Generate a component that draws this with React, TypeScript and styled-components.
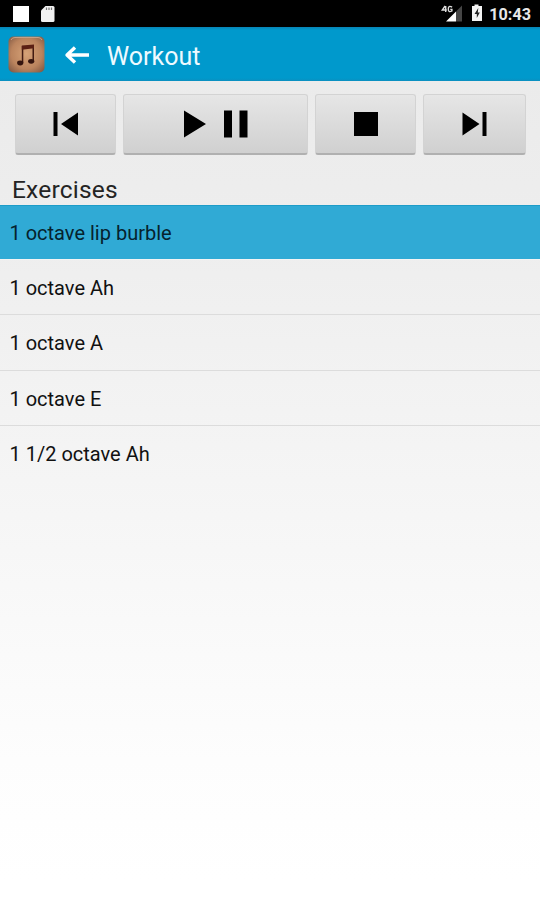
import React from 'react';
import styled, { createGlobalStyle } from 'styled-components';

const GlobalStyle = createGlobalStyle`
  * { box-sizing: border-box; }
  body { margin: 0; font-family: Roboto, "Liberation Sans", sans-serif; color: #161616; }
`;

const Screen = styled.div`
  height: 900px;
  display: flex;
  flex-direction: column;
  overflow: hidden;
  background: linear-gradient(#ebebeb 81px, #eeeeee 240px, #f5f5f5 480px, #fdfdfd 760px, #ffffff 880px);
`;

const StatusBar = styled.div`
  height: 27px;
  flex: none;
  display: flex;
  align-items: center;
  justify-content: space-between;
  background: #000;
  color: #e8e8e8;
`;

const StatusIcons = styled.svg`
  display: block;
`;

const StatusRight = styled.div`
  display: flex;
  align-items: center;
  padding-right: 9px;
`;

const Clock = styled.span`
  font-size: 16.2px;
  font-weight: 700;
  line-height: 25px;
  padding-top: 2px;
`;

const ActionBar = styled.header`
  height: 54px;
  flex: none;
  display: flex;
  align-items: center;
  padding-left: 8px;
  background: linear-gradient(#0784b5 0, #0099cc 3px, #0099cc 51px, #0b8fbf 54px);
`;

const BackArrow = styled.svg`
  margin: 1px 16px 0 19px;
`;

const Title = styled.h1`
  margin: 0;
  padding-top: 5px;
  font-size: 25px;
  font-weight: 400;
  line-height: 30px;
  color: #eefaff;
`;

const Controls = styled.div`
  display: grid;
  grid-template-columns: 101px 185px 101px 103px;
  column-gap: 7px;
  padding: 13px 0 0 15px;
  height: 91px;
  flex: none;
`;

const ControlButton = styled.button`
  height: 61px;
  padding: 0;
  display: flex;
  align-items: center;
  justify-content: center;
  border: 1px solid #d3d3d3;
  border-bottom: 2px solid #b0b0b0;
  border-radius: 3px;
  background: linear-gradient(#e6e6e6, #d0d0d0);
`;

const SectionTitle = styled.h2`
  margin: 0;
  height: 33px;
  flex: none;
  padding: 3px 0 0 12px;
  font-size: 24.5px;
  font-weight: 400;
  line-height: 30px;
  letter-spacing: 0.2px;
  color: #242424;
`;

const List = styled.ul`
  list-style: none;
  margin: 0;
  padding: 0;
`;

const Item = styled.li<{ $selected?: boolean }>`
  height: 55.2px;
  padding: 1px 0 0 9.5px;
  font-size: 20px;
  line-height: 54px;
  border-bottom: 1px solid #dcdcdc;
  color: #111;
  ${(p) => p.$selected && `
    color: #06222d;
    background: #30aad5;
    border-top: 1px solid #1d9cc8;
    border-bottom-color: #f4f4f4;
    line-height: 53px;
  `}
  &:last-child { border-bottom: 0; }
`;

const exercises = ['1 octave lip burble', '1 octave Ah', '1 octave A', '1 octave E', '1 1/2 octave Ah'];

const AppIcon = () => (
  <svg width="37" height="38" viewBox="0 0 37 38">
    <defs>
      <radialGradient id="wood" cx="50%" cy="48%" r="70%">
        <stop offset="0" stopColor="#d6a277" />
        <stop offset=".6" stopColor="#bb845e" />
        <stop offset="1" stopColor="#7c5542" />
      </radialGradient>
    </defs>
    <rect x=".5" y="1.500" width="36" height="36" rx="5" fill="url(#wood)" />
    <path d="M3 5Q4 2.500 7 2.500H30Q33 2.500 34 5" fill="none" stroke="#c7a186" strokeWidth="1" />
    <path d="M13.800 11H15.300V28H13.800ZM24.500 10H26V26H24.500Z" fill="#431b12" />
    <path d="M13.800 10.500L26 9.500V13.200L13.800 14.800Z" fill="#5b2014" />
    <ellipse cx="12.200" cy="28" rx="3.100" ry="2.400" fill="#35150f" />
    <ellipse cx="23.200" cy="26.300" rx="3.100" ry="2.400" fill="#35150f" />
  </svg>
);

export default function App() {
  return (
    <>
      <GlobalStyle />
      <Screen>
        <StatusBar>
          <StatusIcons width="60" height="27">
            <path d="M13 6H29V22H13Z" fill="#fff" />
            <path d="M45.500 6H53Q54.500 6 54.500 7.500V20.500Q54.500 22 53 22H42.500Q41 22 41 20.500V10.500Z" fill="#f2f2f2" />
            <path d="M46.500 7.500V10M49 7.500V10M51.500 7.500V10" stroke="#777" strokeWidth="1.200" />
          </StatusIcons>
          <StatusRight>
            <StatusIcons width="49" height="27" viewBox="-1.500 0 49 27">
              <path d="M20.500 5.500V21.500H14.500V11.500Z" fill="#464646" />
              <path d="M14.500 11.500V21.500H4.500Z" fill="#fff" />
              <path d="M3.600 6L.8 10H5.300M4.200 6V12M10.600 7.200Q6.800 5 6.800 9T10.400 11V9.500H8.800" fill="none" stroke="#ddd" strokeWidth="1.400" />
              <path d="M33 4.500H37V6H40.500V21H30.500V6H33Z" fill="#f4f4f4" />
              <path d="M36.800 8L33 14H35.300V18L38.300 12.500H36.300Z" fill="#222" />
            </StatusIcons>
            <Clock>10:43</Clock>
          </StatusRight>
        </StatusBar>
        <ActionBar>
          <AppIcon />
          <BackArrow width="27" height="22" viewBox="0 0 27 22" fill="none" stroke="#fff" strokeWidth="3.400">
            <path d="M3 11H25M11 3.500L3 11L11 18.500" strokeLinejoin="round" />
          </BackArrow>
          <Title>Workout</Title>
        </ActionBar>
        <Controls>
          <ControlButton aria-label="Previous">
            <svg width="26" height="26"><path d="M.500 1H4.500V25H.500ZM25 1.500V24.500L8 13Z" /></svg>
          </ControlButton>
          <ControlButton aria-label="Play or pause">
            <svg width="64" height="28"><path d="M0 .5V27.500L22 14ZM40 .5H48V27.500H40ZM55.500 .5H63.500V27.500H55.500Z" /></svg>
          </ControlButton>
          <ControlButton aria-label="Stop">
            <svg width="24" height="24"><path d="M0 0H24V24H0Z" /></svg>
          </ControlButton>
          <ControlButton aria-label="Next">
            <svg width="26" height="26"><path d="M.500 1.500V24.500L17.500 13ZM20.500 1H24.500V25H20.500Z" /></svg>
          </ControlButton>
        </Controls>
        <SectionTitle>Exercises</SectionTitle>
        <List>
          {exercises.map((name, i) => (
            <Item key={name} $selected={i === 0}>{name}</Item>
          ))}
        </List>
      </Screen>
    </>
  );
}
